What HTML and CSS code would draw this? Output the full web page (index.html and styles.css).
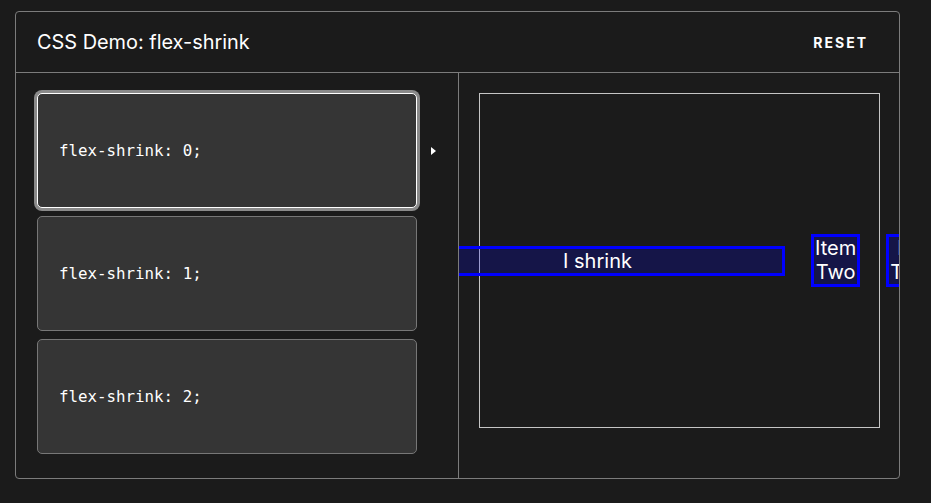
FILE: index.html
```html
<!DOCTYPE html>
<html>
<head>
<meta charset="utf-8">
<link rel="stylesheet" href="styles.css">
</head>
<body>
<div class="demo">
  <header class="demo-header">
    <h1 class="demo-title">CSS Demo: flex-shrink</h1>
    <button class="reset">RESET</button>
  </header>
  <div class="demo-body">
    <div class="choices">
      <div class="choice selected"><code>flex-shrink: 0;</code></div>
      <div class="choice"><code>flex-shrink: 1;</code></div>
      <div class="choice"><code>flex-shrink: 2;</code></div>
    </div>
    <div class="output">
      <section class="example">
        <div class="item item-first">I shrink</div>
        <div class="item item-narrow">Item Two</div>
        <div class="item item-narrow">Item Three</div>
      </section>
    </div>
  </div>
</div>
</body>
</html>
```
FILE: styles.css
```css
html, body {
  margin: 0;
  background: #1b1b1b;
}
body {
  padding: 11px 0 0 15px;
  font-family: Inter, "Noto Sans", sans-serif;
  color: #fff;
}
.demo {
  width: 885px;
  height: 468px;
  box-sizing: border-box;
  border: 1px solid #7c7c7c;
  border-radius: 4px;
  display: flex;
  flex-direction: column;
}
.demo-header {
  height: 60px;
  border-bottom: 1px solid #7c7c7c;
  display: flex;
  align-items: center;
  justify-content: space-between;
  padding: 0 31px 0 21px;
}
.demo-title {
  margin: 0;
  font-size: 19.9px;
  font-weight: 400;
  color: #fff;
}
.reset {
  background: none;
  border: 0;
  padding: 0;
  color: #fff;
  font-family: Inter, sans-serif;
  font-weight: 700;
  font-size: 14px;
  letter-spacing: 2px;
}
.demo-body {
  flex: 1;
  display: flex;
  min-height: 0;
}
.choices {
  width: 443px;
  flex-shrink: 0;
  box-sizing: border-box;
  border-right: 1px solid #7c7c7c;
  padding: 20px 0 0 21px;
  display: flex;
  flex-direction: column;
  gap: 8px;
}
.choice {
  position: relative;
  width: 380px;
  height: 115px;
  box-sizing: border-box;
  background: #353535;
  border: 1px solid #777;
  border-radius: 5px;
  display: flex;
  align-items: center;
  padding-left: 21px;
}
.choice code {
  font-family: "DejaVu Sans Mono", monospace;
  font-size: 15.8px;
  color: #fff;
}
.choice.selected {
  border-color: #fff;
  box-shadow: 0 0 0 3px #8a8a8a;
}
.choice.selected::after {
  content: "";
  position: absolute;
  right: -20px;
  top: 53px;
  border-left: 5px solid #fff;
  border-top: 4px solid transparent;
  border-bottom: 4px solid transparent;
}
.output {
  flex: 1;
  overflow: hidden;
  padding: 20px 0 0 20px;
}
.example {
  width: 401px;
  height: 335px;
  box-sizing: border-box;
  border: 1px solid #c5c5c5;
  display: flex;
  align-items: center;
  gap: 26px;
}
.item {
  flex-shrink: 0;
  background: rgba(0, 0, 255, 0.2);
  border: 3px solid #0000ff;
  font-size: 20px;
  line-height: 23.5px;
  text-align: center;
  color: #fff;
}
.item-first {
  width: 375px;
  box-sizing: border-box;
  line-height: 24px;
  margin-left: -70px;
}
.item-narrow {
  width: min-content;
  padding: 0 1px;
}
```
